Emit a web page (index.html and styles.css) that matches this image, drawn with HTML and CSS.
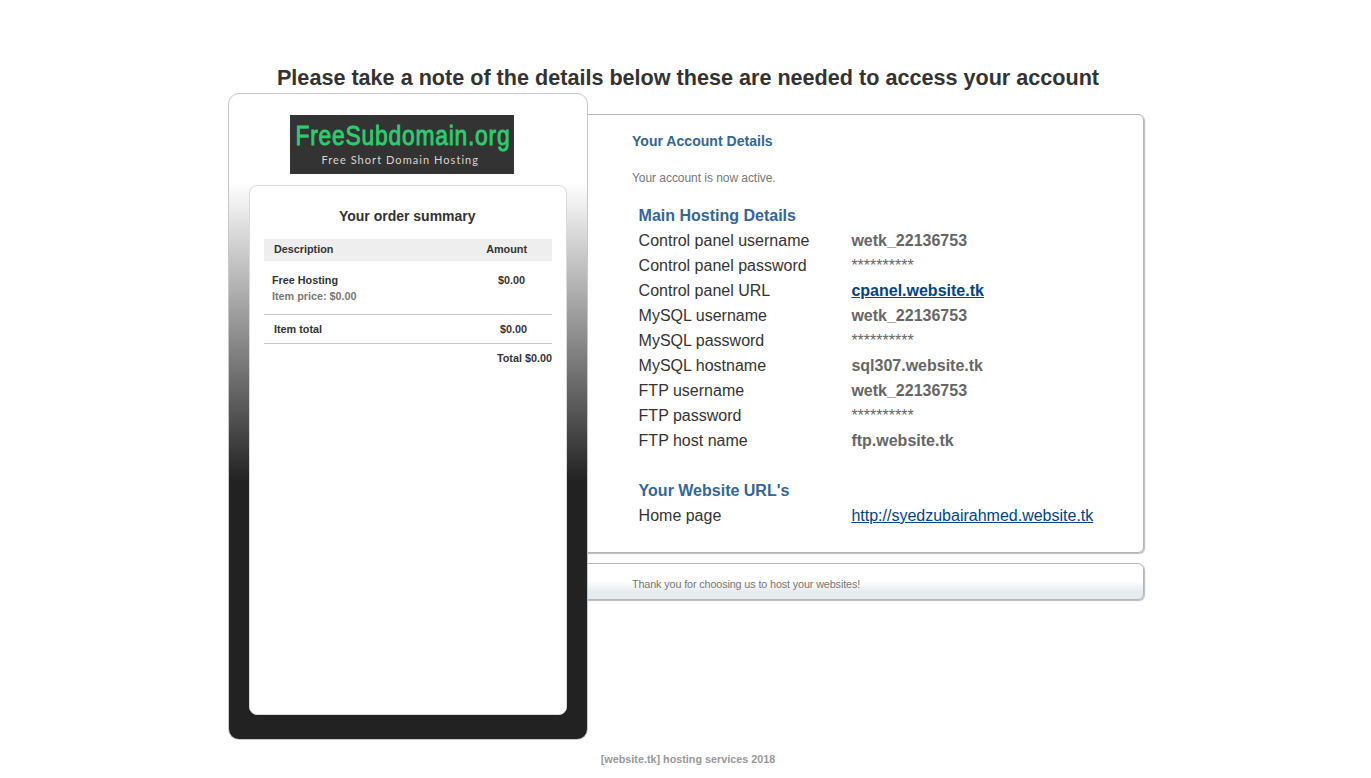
FILE: index.html
```html
<!DOCTYPE html>
<html lang="en">
<head>
<meta charset="utf-8">
<title>Your Account Details</title>
<link rel="stylesheet" href="styles.css">
</head>
<body>
<div class="page">
  <h1 class="page-title">Please take a note of the details below these are needed to access your account</h1>
  <div class="columns">
    <aside class="sidebar">
      <svg class="logo" width="224" height="59" viewBox="0 0 224 59">
        <rect width="224" height="59" fill="#333"/>
        <text class="logo-name" transform="translate(5.5 30) scale(.83 1)" textLength="258" lengthAdjust="spacing">FreeSubdomain.org</text>
        <text class="logo-tag" x="31.5" y="49" textLength="156.5" lengthAdjust="spacing">Free Short Domain Hosting</text>
      </svg>
      <section class="summary">
        <h2 class="summary-title">Your order summary</h2>
        <div class="row row-head"><span>Description</span><span>Amount</span></div>
        <div class="row row-item">
          <div><div>Free Hosting</div><div class="item-price">Item price: $0.00</div></div>
          <span>$0.00</span>
        </div>
        <div class="row row-total"><span>Item total</span><span>$0.00</span></div>
        <div class="grand-total">Total $0.00</div>
      </section>
    </aside>
    <main class="content">
      <section class="panel details">
        <h2 class="details-title">Your Account Details</h2>
        <p class="status">Your account is now active.</p>
        <div class="table">
          <h3 class="group">Main Hosting Details</h3>
          <span>Control panel username</span><b>wetk_22136753</b>
          <span>Control panel password</span><i>**********</i>
          <span>Control panel URL</span><b><a href="#">cpanel.website.tk</a></b>
          <span>MySQL username</span><b>wetk_22136753</b>
          <span>MySQL password</span><i>**********</i>
          <span>MySQL hostname</span><b>sql307.website.tk</b>
          <span>FTP username</span><b>wetk_22136753</b>
          <span>FTP password</span><i>**********</i>
          <span>FTP host name</span><b>ftp.website.tk</b>
          <h3 class="group group-next">Your Website URL's</h3>
          <span>Home page</span><i><a href="#">http://syedzubairahmed.website.tk</a></i>
        </div>
      </section>
      <section class="panel thanks">Thank you for choosing us to host your websites!</section>
    </main>
  </div>
  <footer class="footer">[website.tk] hosting services 2018</footer>
</div>
</body>
</html>
```
FILE: styles.css
```css
* { box-sizing: border-box; }
body {
  margin: 0;
  background: #fff;
  color: #333;
  font-family: "Liberation Sans", Arial, sans-serif;
  font-size: 10.8px;
}
h1, h2, h3, p { margin: 0; }
.page { width: 920px; margin-left: 228px; padding-top: 62px; }
.page-title { height: 31px; font-size: 21.6px; line-height: 31px; text-align: center; white-space: nowrap; }
.columns { display: flex; align-items: flex-start; }

.sidebar {
  position: relative;
  z-index: 1;
  flex: none;
  width: 360px;
  height: 647px;
  padding: 21px 20px 0;
  border: 1px solid #c8c8c8;
  border-radius: 11px;
  background: linear-gradient(#fff 0, #fff 88px, #222 388px);
}
.logo { display: block; margin-left: 41px; }
.logo-name { fill: #2dcc70; stroke: #2dcc70; stroke-width: .9; font-size: 27.5px; }
.logo-tag { fill: #ddd3d3; font-family: Lato, sans-serif; font-size: 11px; font-variant-ligatures: none; }
.summary {
  height: 530px;
  margin-top: 11px;
  padding: 21px 14px 0;
  border: 1px solid #dadada;
  border-radius: 8px;
  background: #fff;
  font-weight: bold;
}
.summary-title { height: 32px; font-size: 14px; line-height: 18px; text-align: center; padding-right: 1.5px; }
.row { display: flex; justify-content: space-between; }
.row-head { height: 22px; padding: 0 25px 0 10px; background: #eee; line-height: 21px; }
.row-item { height: 54px; padding: 11px 27px 0 8px; border-bottom: 1px solid #c8c8c8; line-height: 16px; }
.item-price { color: #777; }
.row-total { height: 29px; padding: 0 25px 0 10px; border-bottom: 1px solid #c8c8c8; line-height: 28px; }
.grand-total { text-align: right; line-height: 28px; }

.content { padding-top: 21px; }
/* Panels tuck under the sidebar so only their right corners show. */
.panel {
  width: 568px;
  margin-left: -12px;
  border: 1px solid #b5b5b5;
  border-radius: 6px;
  box-shadow: 1px 1px 1px #bbb;
}
.details { height: 439px; padding: 17px 0 0 55px; }
.details-title { color: #369; font-size: 14px; line-height: 18px; letter-spacing: .03px; }
.status { margin-top: 20px; color: #777; font-size: 12px; line-height: 16px; letter-spacing: -.05px; }
.table {
  display: grid;
  grid-template-columns: 212.8px 1fr;
  grid-auto-rows: auto;
  margin: 17px 0 0 6.6px;
  font-size: 16px;
  line-height: 25px;
}
.table b, .table i { color: #666; font-style: normal; }
.table a { color: #048; }
.group { grid-column: 1 / -1; color: #369; font-size: 16px; }
.group-next { padding-top: 25px; }
.thanks {
  height: 37px;
  margin-top: 10px;
  padding-left: 55px;
  color: #777;
  line-height: 40px;
  letter-spacing: -.125px;
  background: linear-gradient(#fff 17px, #e6ebee 28px);
}
.footer { color: #999; font-weight: bold; line-height: 14px; margin-top: 12px; text-align: center; }
```
